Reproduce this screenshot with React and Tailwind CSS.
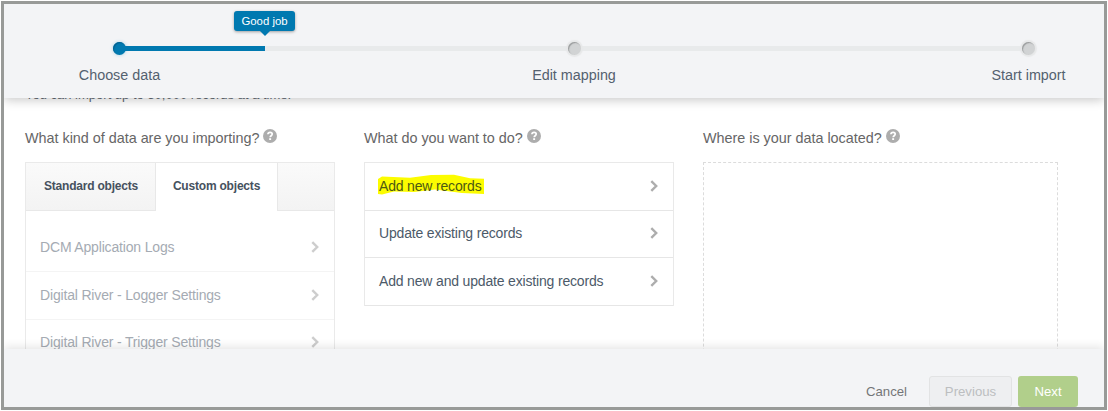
import React from "react";

const Help = () => (
  <svg viewBox="0 0 14 14" className="-mt-[5px] ml-[4px] h-[14px] w-[14px] shrink-0">
    <circle cx="7" cy="7" r="7" fill="#adadad" />
    <path d="M4.9 5.3C5 3.9 6 3.3 7.1 3.3c1.2 0 2.1.7 2.1 1.8 0 1.6-2 1.6-2 3.1" fill="none" stroke="#fff" strokeWidth="1.7" />
    <rect x="6.2" y="9.2" width="1.9" height="1.8" fill="#fff" />
  </svg>
);

const Chevron = ({ className = "" }) => (
  <svg viewBox="0 0 8 12" className={`-mt-px h-[12px] w-[8px] shrink-0 ${className}`}>
    <path d="M1.3 1.2 6.2 6 1.3 10.8" fill="none" stroke="#adadad" strokeWidth="2.4" />
  </svg>
);

const Heading = ({ children }) => (
  <h2 className="flex h-[18px] items-center whitespace-nowrap text-[14.4px] leading-[18px] tracking-[-0.02px] text-[#666666]">
    <span>{children}</span>
    <Help />
  </h2>
);

const objects = ["DCM Application Logs", "Digital River - Logger Settings", "Digital River - Trigger Settings"];
const actions = ["Add new records", "Update existing records", "Add new and update existing records"];

const Step = ({ label, active }) => (
  <div className="flex w-[121px] flex-col items-center">
    <div
      className={
        active
          ? "h-[13px] w-[13px] rounded-full bg-[#0079b0] shadow-[inset_1px_1px_1px_#00608f,0_0_3px_1px_#c5dfeb]"
          : "h-[13px] w-[13px] rounded-full bg-[#d1d3d4] shadow-[inset_1px_1px_1px_#999b9c,0_0_1px_2px_#e7e8e9]"
      }
    />
    <div className="mt-auto whitespace-nowrap text-[14.35px] leading-[18px] text-[#54616f]">{label}</div>
  </div>
);

export default function App() {
  return (
    <div className="h-[411px] w-[1108px] overflow-hidden bg-white p-px font-['Liberation_Sans',Arial,sans-serif]">
      <div className="flex h-[409px] w-[1106px] flex-col overflow-hidden border-[3px] border-[#989a98] bg-white">
        <header className="relative z-10 h-[94px] shrink-0 bg-[#f3f4f6] shadow-[0_2px_10px_rgba(0,0,0,0.22)]">
          <div className="relative pl-[115px] pt-[42px]">
            <div className="h-[5px] w-[909px] bg-[#e8eaeb]" />
            <div className="absolute left-[55px] top-[38px] flex h-[42px] w-[1030px] justify-between">
              <Step label="Choose data" active />
              <Step label="Edit mapping" />
              <Step label="Start import" />
            </div>
            <div className="absolute left-[115px] top-[42px] h-[5px] w-[146px] bg-[#0079b0]" />
            <div className="absolute left-[230px] top-[7px] flex flex-col items-center">
              <div className="flex h-[20px] w-[61px] items-center justify-center whitespace-nowrap rounded-[3px] bg-[#0079b0] pt-px text-[11.4px] text-white shadow-[0_1px_3px_rgba(0,0,0,0.35)]">
                Good job
              </div>
              <svg viewBox="0 0 10 5" className="relative h-[5px] w-[10px]">
                <path d="M0 0h10L5 5z" fill="#0079b0" />
              </svg>
            </div>
          </div>
        </header>

        <main className="h-[251px] shrink-0 overflow-hidden pl-[21px]">
          <p className="-mt-[11px] whitespace-nowrap text-[13px] leading-[16px] text-[#626973]">
            You can import up to 50,000 records at a time.
          </p>
          <div className="mt-[26px] flex">
            <section className="w-[310px]">
              <Heading>What kind of data are you importing?</Heading>
              <div className="mt-[15px] border border-[#eaeaea]">
                <div className="flex h-[48px] whitespace-nowrap text-[12px] font-bold tracking-[-0.2px] text-[#46515e]">
                  <div className="flex w-[130px] items-center justify-center border-b border-r border-[#e8e8e8] bg-gradient-to-b from-[#fafafa] to-[#f3f3f3] pb-[2px] pl-px">
                    Standard objects
                  </div>
                  <div className="flex w-[121px] items-center justify-center pb-[3px]">Custom objects</div>
                  <div className="flex-1 border-b border-l border-[#e8e8e8] bg-gradient-to-b from-[#fafafa] to-[#f3f3f3]" />
                </div>
                <ul className="pt-[13px]">
                  {objects.map((name) => (
                    <li key={name} className="flex h-[47.8px] items-center justify-between border-b border-[#f4f4f4] pl-[14px] pr-[15px] text-[14px] tracking-[-0.17px] text-[#a5abb3]">
                      {name}
                      <Chevron className="opacity-60" />
                    </li>
                  ))}
                </ul>
              </div>
            </section>

            <section className="ml-[29px] w-[310px]">
              <Heading>What do you want to do?</Heading>
              <ul className="mt-[15px] border-x border-t border-[#e9e9e9]">
                {actions.map((name, i) => (
                  <li key={name} className="flex h-[47.6px] items-center justify-between border-b border-[#e6e6e6] pl-[14px] pr-[15px] text-[14px] tracking-[-0.17px] text-[#4c5a69]">
                    {i === 0 ? (
                      <span className="relative text-[#4c5913]">
                        <svg viewBox="0 0 107 21" className="absolute -left-px -top-[2px] h-[21px] w-[107px]">
                          <path d="M0 5 4 2.5 32 3.8 53 1 76 .8 92 4.3 106 4.8V20L84 19 57 15.5 36 18 16 17.5 4 20.5 0 20Z" fill="#fcfc00" />
                        </svg>
                        <span className="relative">{name}</span>
                      </span>
                    ) : (
                      name
                    )}
                    <Chevron />
                  </li>
                ))}
              </ul>
            </section>

            <section className="ml-[29px] w-[355px]">
              <Heading>Where is your data located?</Heading>
              <div className="mt-[15px] h-[230px] border border-dashed border-[#dcdcdc]" />
            </section>
          </div>
        </main>

        <footer className="relative z-10 flex h-[58px] shrink-0 items-start justify-end bg-[#f3f4f6] pr-[26px] pt-[27px] text-[13.2px] shadow-[0_-2px_9px_rgba(0,0,0,0.11)]">
          <button className="mr-[22px] h-[31px] text-[#737678]">Cancel</button>
          <button className="mr-[6px] h-[31px] w-[83px] rounded-[3px] border border-[#e2e3e4] bg-[#eeeff1] text-[#bcbec0]">Previous</button>
          <button className="h-[31px] w-[60px] rounded-[3px] bg-[#b1cf8b] text-white">Next</button>
        </footer>
      </div>
    </div>
  );
}
